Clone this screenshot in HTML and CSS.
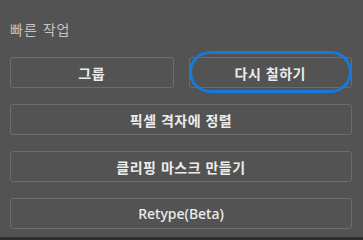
FILE: index.html
```html
<!DOCTYPE html>
<html lang="ko">
<head>
    <meta charset="UTF-8">
    <meta name="viewport" content="width=device-width, initial-scale=1.0">
    <title>빠른 작업</title>
    <link rel="stylesheet" href="styles.css">
</head>
<body>
    <div class="panel">
        <div class="panel-title">빠른 작업</div>
        <div class="actions">
            <div class="action-row">
                <button class="action">그룹</button>
                <button class="action highlighted">다시 칠하기</button>
            </div>
            <button class="action">픽셀 격자에 정렬</button>
            <button class="action">클리핑 마스크 만들기</button>
            <button class="action latin">Retype(Beta)</button>
        </div>
    </div>
</body>
</html>
```

FILE: styles.css
```css
body {
    margin: 0;
    background-color: #2e2e2e;
    font-family: "Noto Sans CJK KR", "Noto Sans", sans-serif;
}

.panel {
    height: 237px;
    box-sizing: border-box;
    padding: 0 11px 0 10px;
    background-color: #535353;
}

.panel-title {
    height: 57px;
    padding-top: 21px;
    box-sizing: border-box;
    font-size: 14px;
    line-height: 16px;
    letter-spacing: 1px;
    color: #c4c4c4;
}

.actions {
    display: flex;
    flex-direction: column;
    gap: 16px;
}

.action-row {
    display: flex;
    gap: 15px;
}

.action-row .action {
    flex: 1;
}

.action {
    position: relative;
    height: 31px;
    padding: 0;
    background-color: #535353;
    border: 1px solid #6c6c6c;
    border-radius: 3px;
    font-family: "Noto Sans CJK KR", "Noto Sans", sans-serif;
    font-size: 14px;
    font-weight: bold;
    letter-spacing: 0.5px;
    color: #ececec;
}

.action.latin {
    font-family: "Noto Sans", sans-serif;
    font-weight: 500;
    font-size: 14px;
    letter-spacing: 0;
}

.highlighted::after {
    content: "";
    position: absolute;
    top: -7px;
    bottom: -6px;
    left: -1px;
    right: -1px;
    border: 3px solid #1679dc;
    border-radius: 999px;
}
```
